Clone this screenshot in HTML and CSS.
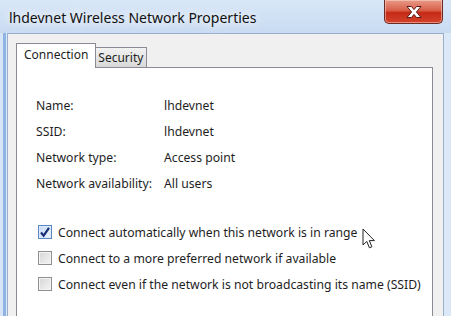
FILE: index.html
```html
<!DOCTYPE html>
<html lang="en">
  <head>
    <meta charset="UTF-8" />
    <title>lhdevnet Wireless Network Properties</title>
    <link rel="stylesheet" href="styles.css">
  </head>
  <body>
    <div id="window">
      <!-- TITLE BAR -->
      <div id="titleBar">
        <div id="windowTitle">lhdevnet Wireless Network Properties</div>
        <div id="closeButton">
          <svg width="22" height="14" viewBox="0 0 22 14">
            <path d="M4 1.5 L8.5 1.5 L11 4.6 L13.5 1.5 L18 1.5 L13.4 7 L18 12.5 L13.5 12.5 L11 9.4 L8.5 12.5 L4 12.5 L8.6 7 Z"
              fill="#fff" stroke="#5a1a14" stroke-width="1" stroke-linejoin="round" />
          </svg>
        </div>
      </div>

      <!-- CLIENT -->
      <div id="client">
        <div id="tabs">
          <div class="tab selected">Connection</div>
          <div class="tab">Security</div>
        </div>

        <div id="pane">
          <div id="infoGrid">
            <div class="infoLabel">Name:</div>
            <div class="infoValue">lhdevnet</div>
            <div class="infoLabel">SSID:</div>
            <div class="infoValue">lhdevnet</div>
            <div class="infoLabel">Network type:</div>
            <div class="infoValue">Access point</div>
            <div class="infoLabel">Network availability:</div>
            <div class="infoValue">All users</div>
          </div>

          <div id="options">
            <div class="option">
              <span class="checkBox checked">
                <svg width="12" height="12" viewBox="0 0 12 12">
                  <path d="M2 6.5 L4.6 9.6 L10 1.8" fill="none" stroke="#1b2f7a" stroke-width="2.2" />
                </svg>
              </span>
              <span class="optionText">Connect automatically when this network is in range</span>
              <svg class="cursor" width="14" height="22" viewBox="0 0 14 22">
                <path d="M1 1 L1 17 L4.8 13.4 L7.4 19.8 L9.9 18.8 L7.3 12.6 L12.4 12.6 Z"
                  fill="#fff" stroke="#222" stroke-width="1" stroke-linejoin="round" />
              </svg>
            </div>
            <div class="option">
              <span class="checkBox"></span>
              <span class="optionText">Connect to a more preferred network if available</span>
            </div>
            <div class="option">
              <span class="checkBox"></span>
              <span class="optionText">Connect even if the network is not broadcasting its name (SSID)</span>
            </div>
          </div>
        </div>
      </div>
    </div>
  </body>
</html>
```

FILE: styles.css
```css
body {
  margin: 0;
  width: 451px;
  height: 316px;
  overflow: hidden;
  font-family: "Segoe UI", "Noto Sans", sans-serif;
  color: #1e1e1e;
}

#window {
  width: 451px;
  height: 316px;
  background: linear-gradient(90deg, #d6e5f6 0, #d6e5f6 3px, #8fb3e2 3px, #8fb3e2 6px, #dbe8f7 6px);
  overflow: hidden;
}

#titleBar {
  height: 33px;
  display: flex;
  align-items: flex-start;
  justify-content: space-between;
  background: linear-gradient(180deg, #d9e7f8, #c8dbf2);
  padding: 0 8px 0 9px;
}

#windowTitle {
  font-size: 14px;
  margin-top: 8px;
  color: #111;
  text-shadow: 0 0 8px #fff, 0 0 14px #fff;
}

#closeButton {
  width: 57px;
  height: 23px;
  display: flex;
  align-items: center;
  justify-content: center;
  background: linear-gradient(180deg, #e89a88 0, #d8604a 45%, #c52a16 55%, #d4432c 100%);
  border: 1px solid #6b2a22;
  border-top: none;
  border-radius: 0 0 5px 5px;
  box-shadow: inset 0 0 0 1px rgba(255, 220, 210, 0.5);
}

#client {
  margin: 0 7px;
  height: 300px;
  background: #f0f0f0;
  border: 1px solid #9aafcc;
  padding: 10px 10px 0 8px;
}

#tabs {
  display: flex;
  align-items: flex-end;
  height: 23px;
}

.tab {
  font-size: 12px;
  border: 1px solid #898c95;
  border-bottom: none;
  border-left: none;
  padding: 0 3px 0 2px;
  height: 19px;
  line-height: 19px;
  background: linear-gradient(180deg, #f2f2f2, #d8d8d8);
}

.tab.selected {
  background: #fff;
  line-height: 21px;
  padding: 0 7px 0 7px;
  border-left: 1px solid #898c95;
  position: relative;
  z-index: 1;
  margin-bottom: -1px;
  height: 24px;
}

#pane {
  background: #fff;
  border: 1px solid #898c95;
  height: 260px;
  padding: 24px 0 0 19px;
}

#infoGrid {
  display: grid;
  grid-template-columns: 128px auto;
  grid-auto-rows: 26px;
  align-items: center;
  font-size: 12.2px;
}

#options {
  margin-top: 23px;
  display: flex;
  flex-direction: column;
  font-size: 12.2px;
}

.option {
  height: 26px;
  display: flex;
  align-items: center;
  gap: 6px;
  padding-left: 2px;
}

.checkBox {
  width: 12px;
  height: 12px;
  border: 1px solid #8e8f8f;
  background: linear-gradient(135deg, #d6d6d6, #f4f4f4);
  box-shadow: inset 0 0 0 1px #f4f4f4;
  display: flex;
  align-items: center;
  justify-content: center;
}

.checkBox.checked {
  border-color: #5b87c5;
  background: linear-gradient(135deg, #c5dcf5, #eef5fd);
  box-shadow: inset 0 0 0 1px #dcebfb;
}

.cursor {
  margin-left: -1px;
  margin-top: 14px;
}
```
